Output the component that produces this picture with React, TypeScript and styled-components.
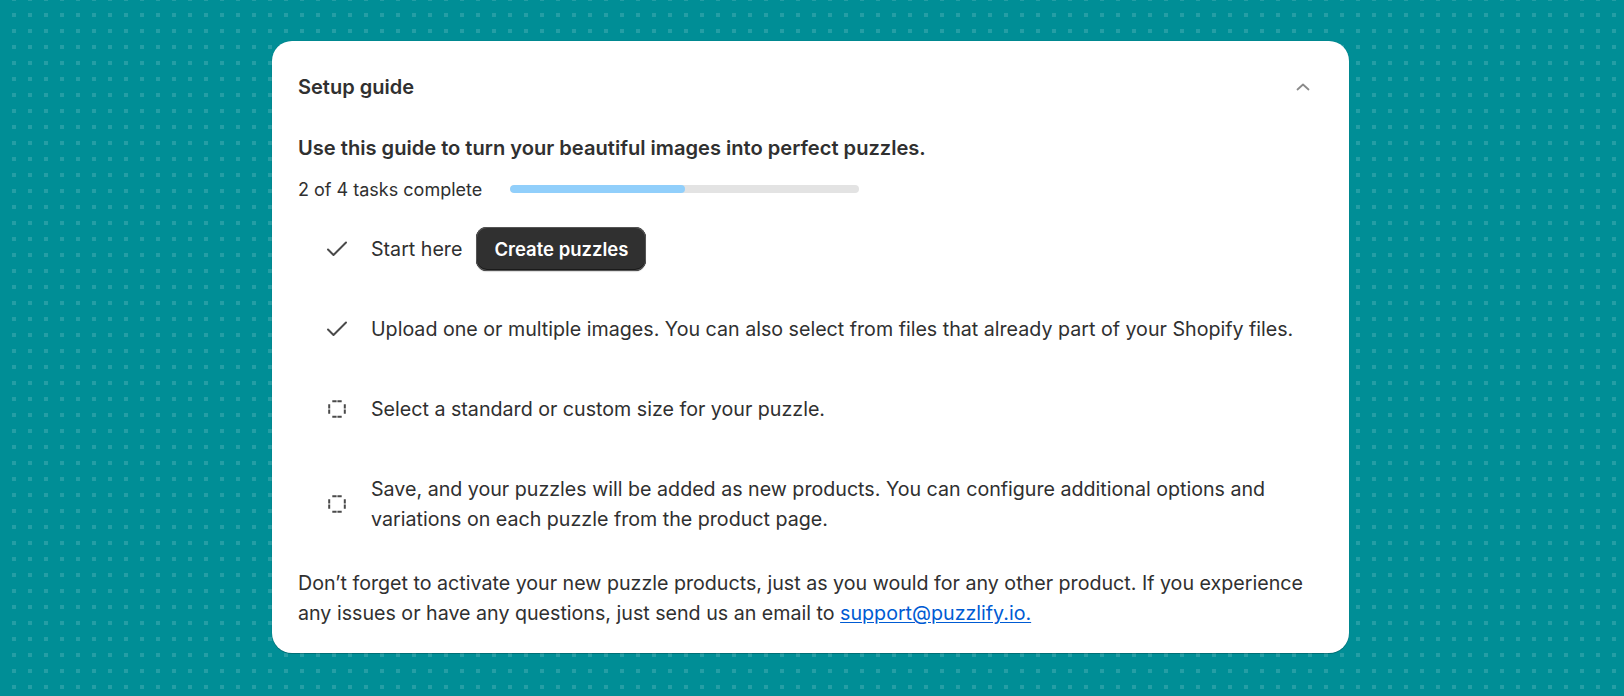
import React from "react";
import styled, { createGlobalStyle } from "styled-components";

const GlobalStyle = createGlobalStyle`
  html, body {
    margin: 0;
    padding: 0;
  }
  body {
    min-height: 696px;
    background-color: #008e96;
    background-image: conic-gradient(
      from 90deg at 4px 4px,
      transparent 50%,
      rgba(255, 255, 255, 0.14) 50% 75%,
      transparent 75%
    );
    background-size: 16px 16px;
    background-position: 12px 13px;
    font-family: Inter, "Noto Sans", "Liberation Sans", sans-serif;
    color: #303030;
    -webkit-font-smoothing: antialiased;
  }
`;

const Page = styled.main`
  display: flex;
  justify-content: center;
  padding: 41px 0 0 0;
`;

const Card = styled.section`
  width: 1077px;
  margin-left: -3px;
  box-sizing: border-box;
  background: #ffffff;
  border-radius: 20px;
  box-shadow: 0 1px 0 rgba(0, 0, 0, 0.18), 0 0 0 1px rgba(0, 0, 0, 0.04);
  padding: 26px 26px 25px 26px;
`;

const Header = styled.header`
  display: flex;
  align-items: center;
  justify-content: space-between;
  height: 40px;
`;

const Title = styled.h2`
  margin: 0;
  font-size: 20px;
  font-weight: 600;
  line-height: 28px;
`;

const CollapseButton = styled.button`
  display: flex;
  align-items: center;
  justify-content: center;
  width: 28px;
  height: 28px;
  margin-right: 6px;
  padding: 0;
  border: none;
  background: transparent;
  color: #8a8a8a;
  cursor: pointer;
`;

const Intro = styled.p`
  margin: 26px 0 0;
  font-size: 20.1px;
  font-weight: 600;
  line-height: 30px;
`;

const Progress = styled.div`
  display: flex;
  align-items: center;
  gap: 28px;
  height: 30px;
  margin-top: 11px;
  font-size: 18px;
`;

const Track = styled.div`
  width: 349px;
  height: 8px;
  border-radius: 4px;
  background: #e3e3e3;
  overflow: hidden;
`;

const Fill = styled.div`
  height: 100%;
  border-radius: 4px;
  background: #91cffb;
`;

const TaskList = styled.ol`
  list-style: none;
  margin: 5px 0 0;
  padding: 0 0 0 27px;
`;

const Task = styled.li`
  display: flex;
  align-items: center;
  gap: 22px;
  padding: 25px 0;
  font-size: 19.65px;
  line-height: 30px;
`;

const IconBox = styled.span`
  flex: 0 0 24px;
  display: flex;
  align-items: center;
  justify-content: center;
  height: 24px;
  color: #4a4a4a;
`;

const TaskText = styled.span`
  display: flex;
  align-items: center;
  gap: 14px;
`;

const PrimaryButton = styled.button`
  height: 44px;
  margin: -7px 0;
  padding: 0 18px;
  border: none;
  border-radius: 11px;
  background: #303030;
  color: #ffffff;
  font-family: inherit;
  font-size: 18.5px;
  font-weight: 600;
  box-shadow: inset 0 0 0 1px #555555, inset 0 -1px 0 1px #1a1a1a,
    0 1px 1px rgba(0, 0, 0, 0.15);
  cursor: pointer;
`;

const Footer = styled.p`
  margin: 9px 0 0;
  font-size: 19.65px;
  line-height: 30px;
`;

const MailLink = styled.a`
  color: #005bd3;
  text-decoration: underline;
  text-underline-offset: 2px;
`;

const ChevronUp = () => (
  <svg width="14" height="14" viewBox="0 0 14 14" fill="none">
    <path
      d="M1.5 9.5 7 4.5l5.5 5"
      stroke="currentColor"
      strokeWidth="1.8"
      strokeLinecap="round"
      strokeLinejoin="round"
    />
  </svg>
);

const CheckMark = () => (
  <svg width="22" height="18" viewBox="0 0 22 18" fill="none">
    <path
      d="M2 9.5 7.5 15 20 2.5"
      stroke="currentColor"
      strokeWidth="2"
      strokeLinecap="round"
      strokeLinejoin="round"
    />
  </svg>
);

const DashedCircle = () => (
  <svg width="20" height="20" viewBox="0 0 20 20" fill="none">
    <g stroke="currentColor" strokeWidth="2" strokeLinecap="butt">
      <path d="M5.3 2.2h4.3M10.4 2.2h4.3" />
      <path d="M5.3 17.8h4.3M10.4 17.8h4.3" />
      <path d="M2.2 5.3v4.3M2.2 10.4v4.3" />
      <path d="M17.8 5.3v4.3M17.8 10.4v4.3" />
    </g>
  </svg>
);

type Step = {
  done: boolean;
  text: string;
  action?: string;
};

const steps: Step[] = [
  { done: true, text: "Start here", action: "Create puzzles" },
  {
    done: true,
    text: "Upload one or multiple images. You can also select from files that already part of your Shopify files.",
  },
  { done: false, text: "Select a standard or custom size for your puzzle." },
  {
    done: false,
    text: "Save, and your puzzles will be added as new products. You can configure additional options and variations on each puzzle from the product page.",
  },
];

export default function App() {
  const completed = steps.filter((s) => s.done).length;
  const percent = (completed / steps.length) * 100;

  return (
    <>
      <GlobalStyle />
      <Page>
        <Card>
          <Header>
            <Title>Setup guide</Title>
            <CollapseButton aria-label="Collapse setup guide">
              <ChevronUp />
            </CollapseButton>
          </Header>
          <Intro>Use this guide to turn your beautiful images into perfect puzzles.</Intro>
          <Progress>
            <span>
              {completed} of {steps.length} tasks complete
            </span>
            <Track>
              <Fill style={{ width: `${percent}%` }} />
            </Track>
          </Progress>
          <TaskList>
            {steps.map((step) => (
              <Task key={step.text}>
                <IconBox>{step.done ? <CheckMark /> : <DashedCircle />}</IconBox>
                <TaskText>
                  {step.text}
                  {step.action && <PrimaryButton>{step.action}</PrimaryButton>}
                </TaskText>
              </Task>
            ))}
          </TaskList>
          <Footer>
            Don’t forget to activate your new puzzle products, just as you would for any other
            product. If you experience any issues or have any questions, just send us an email to{" "}
            <MailLink href="mailto:support@puzzlify.io">support@puzzlify.io.</MailLink>
          </Footer>
        </Card>
      </Page>
    </>
  );
}
